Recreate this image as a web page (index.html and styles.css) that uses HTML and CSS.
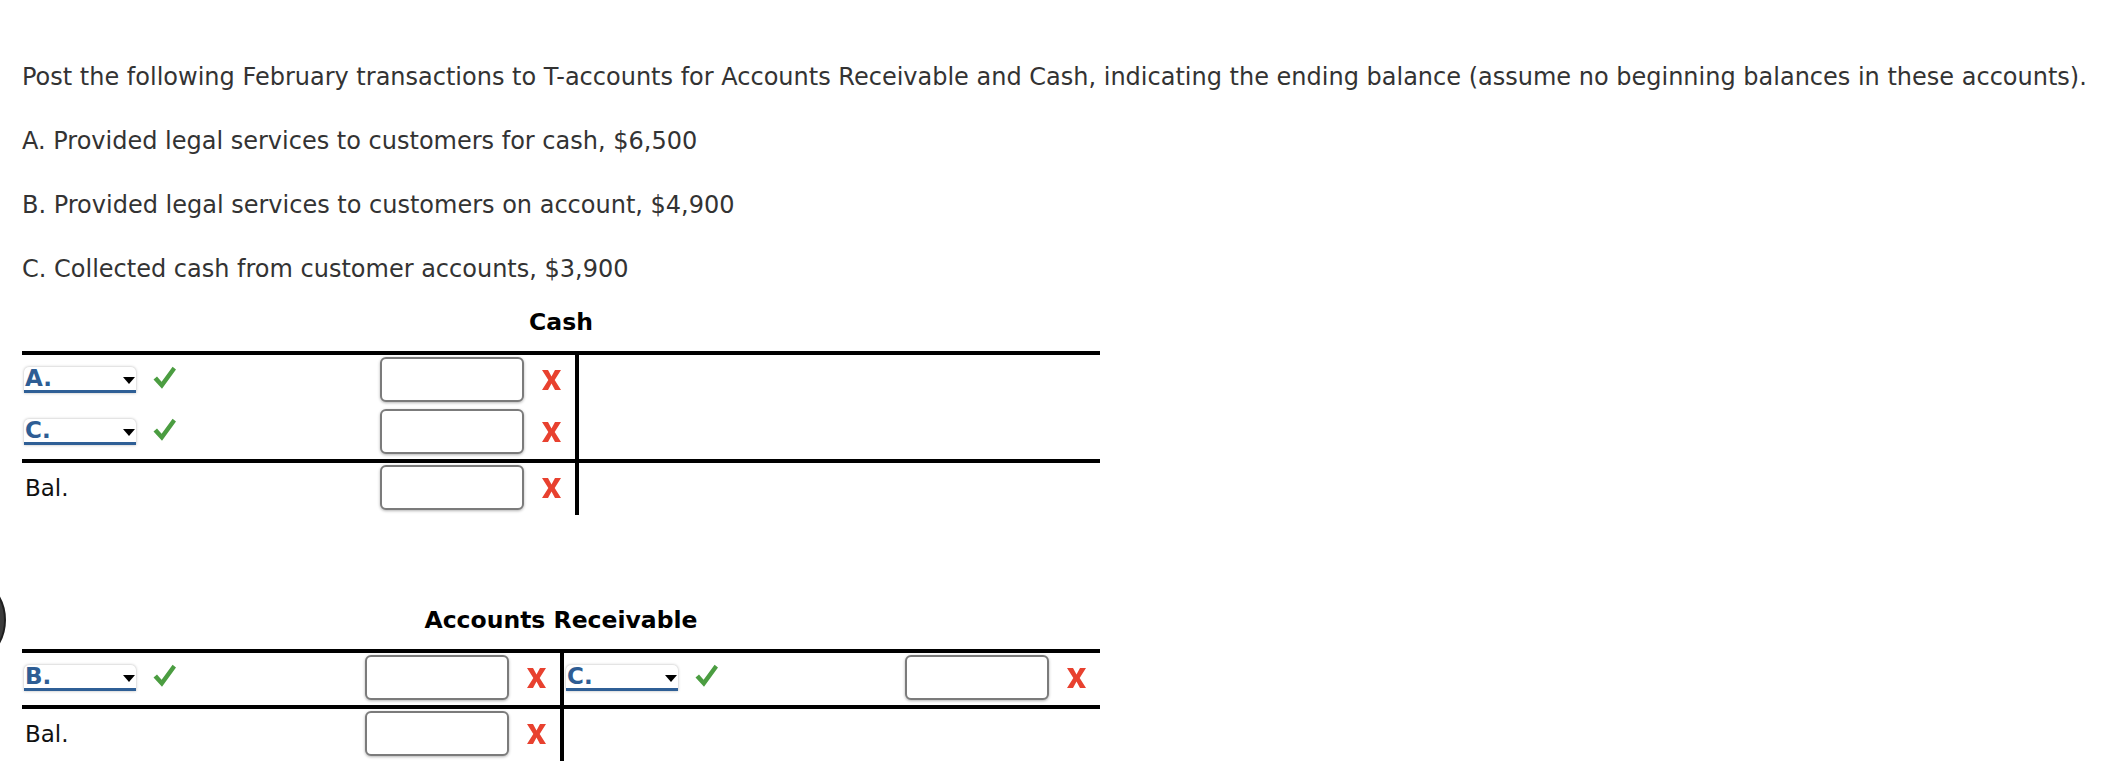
FILE: index.html
```
<!DOCTYPE html>
<html lang="en">
<head>
<meta charset="utf-8">
<title>T-accounts</title>
<link rel="stylesheet" href="styles.css">
</head>
<body>
<div class="dot"></div>
<main class="page">
  <p class="q">Post the following February transactions to T-accounts for Accounts Receivable and Cash, indicating the ending balance (assume no beginning balances in these accounts).</p>
  <p class="q">A. Provided legal services to customers for cash, $6,500</p>
  <p class="q">B. Provided legal services to customers on account, $4,900</p>
  <p class="q last">C. Collected cash from customer accounts, $3,900</p>

  <section class="acct">
    <h2 class="acct-title">Cash</h2>
    <div class="tacct cash">
      <div class="cell">
        <div class="entry">
          <span class="dd">A.<i class="caret"></i></span>
          <svg class="ok" viewBox="0 0 23 24"><polygon points="0.5,13.5 4,10.5 8.6,15.8 19.6,0.8 23,3.4 9,22.8"/></svg>
        </div>
        <div class="amt">
          <input class="box" type="text">
          <svg class="bad" viewBox="0 0 19 20"><polygon points="0,0 6,0 9.5,6.4 13,0 19,0 12.7,10 19,20 13,20 9.5,13.6 6,20 0,20 6.3,10"/></svg>
        </div>
      </div>
      <div class="cell r"></div>

      <div class="cell">
        <div class="entry">
          <span class="dd">C.<i class="caret"></i></span>
          <svg class="ok" viewBox="0 0 23 24"><polygon points="0.5,13.5 4,10.5 8.6,15.8 19.6,0.8 23,3.4 9,22.8"/></svg>
        </div>
        <div class="amt">
          <input class="box" type="text">
          <svg class="bad" viewBox="0 0 19 20"><polygon points="0,0 6,0 9.5,6.4 13,0 19,0 12.7,10 19,20 13,20 9.5,13.6 6,20 0,20 6.3,10"/></svg>
        </div>
      </div>
      <div class="cell r"></div>

      <div class="cell bal">
        <span class="bal-label">Bal.</span>
        <div class="amt">
          <input class="box" type="text">
          <svg class="bad" viewBox="0 0 19 20"><polygon points="0,0 6,0 9.5,6.4 13,0 19,0 12.7,10 19,20 13,20 9.5,13.6 6,20 0,20 6.3,10"/></svg>
        </div>
      </div>
      <div class="cell r bal"></div>
    </div>
  </section>

  <section class="acct second">
    <h2 class="acct-title">Accounts Receivable</h2>
    <div class="tacct ar">
      <div class="cell">
        <div class="entry">
          <span class="dd">B.<i class="caret"></i></span>
          <svg class="ok" viewBox="0 0 23 24"><polygon points="0.5,13.5 4,10.5 8.6,15.8 19.6,0.8 23,3.4 9,22.8"/></svg>
        </div>
        <div class="amt">
          <input class="box" type="text">
          <svg class="bad" viewBox="0 0 19 20"><polygon points="0,0 6,0 9.5,6.4 13,0 19,0 12.7,10 19,20 13,20 9.5,13.6 6,20 0,20 6.3,10"/></svg>
        </div>
      </div>
      <div class="cell r">
        <div class="entry">
          <span class="dd">C.<i class="caret"></i></span>
          <svg class="ok" viewBox="0 0 23 24"><polygon points="0.5,13.5 4,10.5 8.6,15.8 19.6,0.8 23,3.4 9,22.8"/></svg>
        </div>
        <div class="amt">
          <input class="box" type="text">
          <svg class="bad" viewBox="0 0 19 20"><polygon points="0,0 6,0 9.5,6.4 13,0 19,0 12.7,10 19,20 13,20 9.5,13.6 6,20 0,20 6.3,10"/></svg>
        </div>
      </div>

      <div class="cell bal">
        <span class="bal-label">Bal.</span>
        <div class="amt">
          <input class="box" type="text">
          <svg class="bad" viewBox="0 0 19 20"><polygon points="0,0 6,0 9.5,6.4 13,0 19,0 12.7,10 19,20 13,20 9.5,13.6 6,20 0,20 6.3,10"/></svg>
        </div>
      </div>
      <div class="cell r bal"></div>
    </div>
  </section>
</main>
</body>
</html>
```
FILE: styles.css
```
html, body {
  margin: 0;
  background: #fff;
}
body {
  position: relative;
  overflow: hidden;
  font-family: "DejaVu Sans", Verdana, sans-serif;
  color: #333;
}
.dot {
  position: absolute;
  left: -90px;
  top: 572px;
  width: 96px;
  height: 96px;
  box-sizing: border-box;
  border-radius: 50%;
  background: #3b3b3b;
  border: 2px solid #1e1e1e;
}
.page {
  padding: 62px 0 0 22px;
}
.q {
  margin: 0 0 34px;
  font-size: 24px;
  line-height: 30px;
  white-space: nowrap;
}
.q.last {
  margin-bottom: 23px;
}
.acct {
  width: 1078px;
}
.acct.second {
  margin-top: 90px;
}
.acct-title {
  margin: 0 0 14px;
  font-size: 23.5px;
  line-height: 30px;
  font-weight: bold;
  color: #000;
  text-align: center;
}
.tacct {
  display: grid;
  border-top: 4px solid #000;
}
.cash {
  grid-template-columns: 553px 525px;
}
.ar {
  grid-template-columns: 538px 540px;
}
.cell {
  display: flex;
  align-items: center;
  justify-content: space-between;
  min-height: 45px;
  padding: 2px 14px 5px 2px;
}
.cell.r {
  border-left: 4px solid #000;
}
.cell.bal {
  border-top: 4px solid #000;
}
.entry {
  display: flex;
  align-items: center;
}
.dd {
  position: relative;
  display: block;
  box-sizing: border-box;
  width: 112px;
  height: 26px;
  padding-left: 1px;
  background: #fff;
  border-bottom: 3px solid #2f5f96;
  border-radius: 5px 5px 0 0;
  box-shadow: 0 0 3px rgba(0, 0, 0, 0.3);
  font-size: 23px;
  line-height: 23px;
  font-weight: bold;
  color: #2e5d94;
}
.caret {
  position: absolute;
  right: 1px;
  top: 10px;
  width: 0;
  height: 0;
  border-left: 6px solid transparent;
  border-right: 6px solid transparent;
  border-top: 7px solid #000;
}
.ok {
  width: 23px;
  height: 24px;
  margin: 0 0 4px 17px;
  fill: #4b9d41;
}
.amt {
  display: flex;
  align-items: center;
  gap: 18px;
}
.box {
  box-sizing: border-box;
  width: 144px;
  height: 45px;
  margin: 0;
  padding: 0;
  border: 2px solid #7b7b7b;
  border-radius: 6px;
  background: #fff;
  box-shadow: 0 1px 3px rgba(0, 0, 0, 0.3);
  outline: none;
}
.bad {
  width: 19px;
  height: 20px;
  fill: #e8412f;
}
.bal-label {
  padding-left: 1px;
  font-size: 23px;
  color: #111;
}
```
